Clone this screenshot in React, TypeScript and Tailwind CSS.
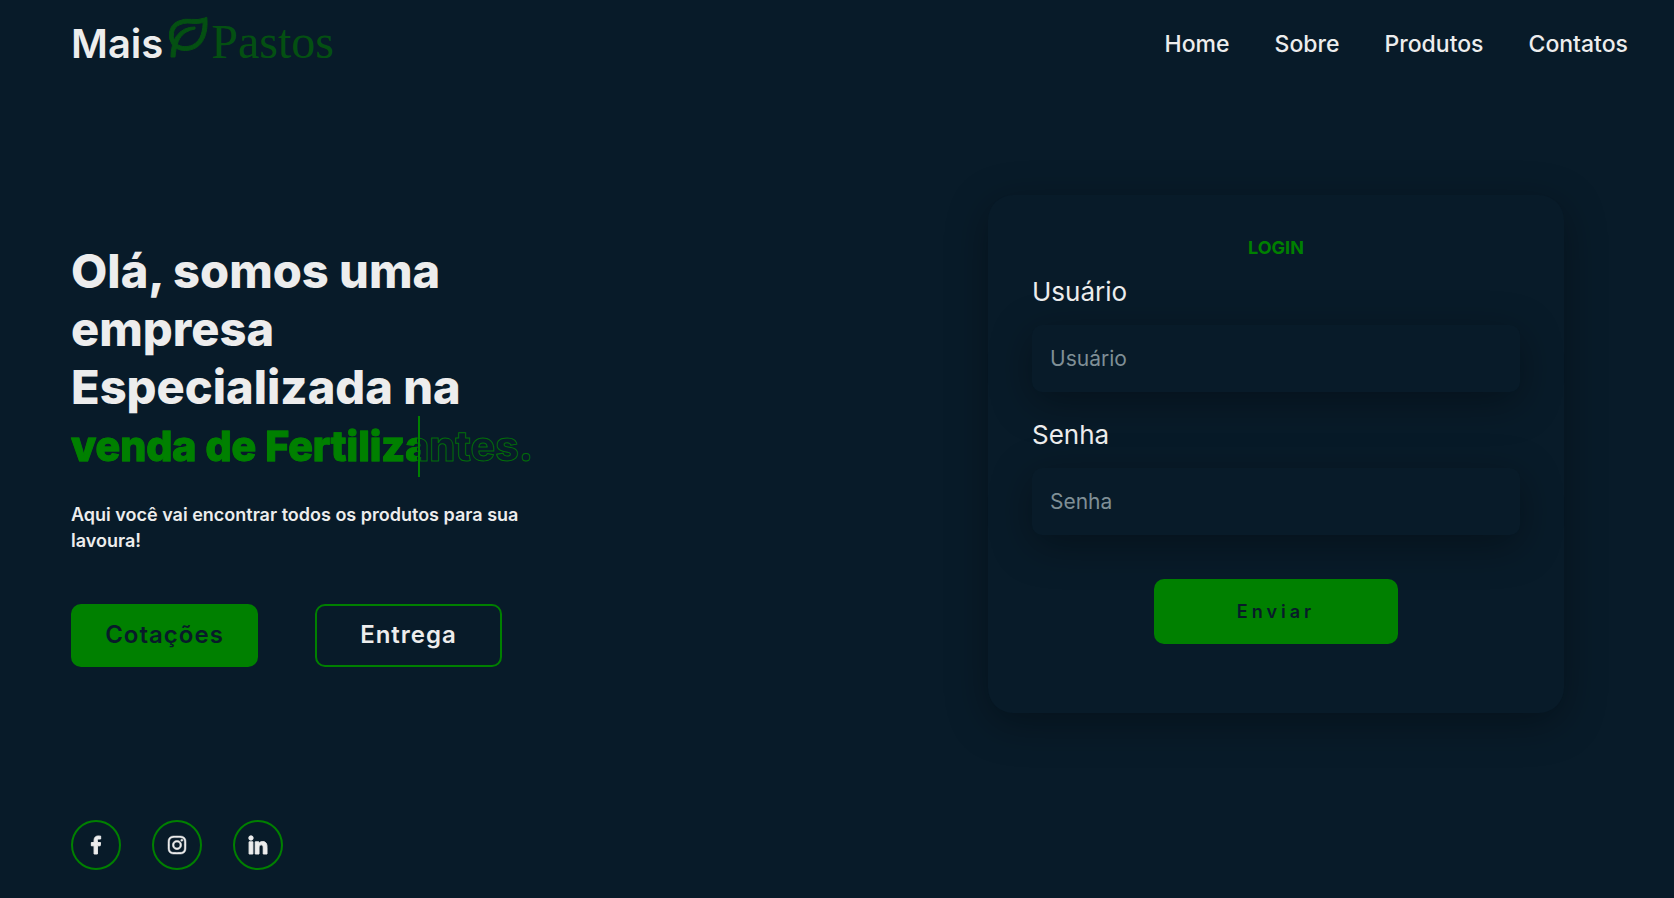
import React from "react";
import { BiLeaf, BiLogoFacebook, BiLogoInstagram, BiLogoLinkedin } from "react-icons/bi";

const links = ["Home", "Sobre", "Produtos", "Contatos"];

const socials = [
  { label: "Facebook", Icon: BiLogoFacebook, weight: "stroke-1" },
  { label: "Instagram", Icon: BiLogoInstagram, weight: "stroke-[0.5]" },
  { label: "LinkedIn", Icon: BiLogoLinkedin, weight: "stroke-1" },
];

function Header() {
  return (
    <header className="flex h-[88px] flex-wrap items-center justify-between pr-[46px] pl-[71px]">
      <a href="#home" className="flex items-center text-[40px] leading-none font-semibold">
        Mais
        <span className="flex items-center pb-1 font-['Liberation_Serif',serif] text-5xl leading-none font-normal text-[#045012]">
          <BiLeaf className="-mt-2.5 stroke-[#045012] stroke-[0.5]" aria-hidden="true" />
          Pastos
        </span>
      </a>
      <nav className="flex gap-[45px] text-[23px] font-medium">
        {links.map((link) => (
          <a key={link} href={`#${link.toLowerCase()}`}>
            {link}
          </a>
        ))}
      </nav>
    </header>
  );
}

function Hero() {
  return (
    <section className="w-[480px]">
      <h1 className="text-[47px] leading-[58px] font-extrabold">
        Olá, somos uma
        <br />
        empresa
        <br />
        Especializada na
      </h1>
      <h2 className="relative w-fit bg-linear-to-r from-[#008000] from-75% to-transparent to-75% bg-clip-text text-[41px] leading-[61px] font-extrabold whitespace-nowrap text-transparent [-webkit-text-stroke:1px_#008000d0]">
        venda de Fertilizantes.
        <span aria-hidden="true" className="absolute top-0 left-3/4 h-full w-0.5 bg-[#008000]" />
      </h2>
      <p className="mt-[25px] text-[18px] leading-[26px] font-semibold">
        Aqui você vai encontrar todos os produtos para sua lavoura!
      </p>
      <div className="mt-[50px] flex gap-[57px] text-2xl font-semibold tracking-[1px]">
        <button
          type="button"
          className="h-[63px] w-[187px] rounded-[10px] border-2 border-[#008000] bg-[#008000] text-[#081b29]"
        >
          Cotações
        </button>
        <button type="button" className="h-[63px] w-[187px] rounded-[10px] border-2 border-[#008000]">
          Entrega
        </button>
      </div>
    </section>
  );
}

function Field({ id, label, type }: { id: string; label: string; type: string }) {
  return (
    <div className="flex flex-col gap-[15px]">
      <label htmlFor={id} className="text-[26px] leading-9">
        {label}
      </label>
      <input
        id={id}
        type={type}
        placeholder={label}
        className="h-[67px] w-full rounded-[10px] bg-[#081b29] px-[18px] text-[21px] shadow-[0_10px_40px_#00000056] outline-none placeholder:text-[#7f8f96]"
      />
    </div>
  );
}

function Login() {
  return (
    <form className="flex w-[576px] flex-col items-center rounded-[25px] bg-[#081b29] px-11 pt-10 pb-[69px] shadow-[0_10px_40px_#00000056]">
      <h2 className="text-[18px] leading-[26px] font-bold text-[#008000]">LOGIN</h2>
      <div className="mt-[13px] flex w-full flex-col gap-[25px]">
        <Field id="usuario" label="Usuário" type="text" />
        <Field id="senha" label="Senha" type="password" />
      </div>
      <button
        type="button"
        className="mt-11 h-[65px] w-1/2 rounded-[10px] bg-[#008000] text-[18px] font-semibold tracking-[4px] text-[#081b29]"
      >
        Enviar
      </button>
    </form>
  );
}

export default function App() {
  return (
    <div className="flex min-h-screen flex-col bg-[#081b29] font-[Inter,sans-serif] text-[#ededed]">
      <Header />
      <main className="flex flex-1 flex-wrap items-center justify-between gap-8 pr-[110px] pl-[71px]">
        <Hero />
        <Login />
      </main>
      <footer className="flex gap-[31px] pb-7 pl-[71px]">
        {socials.map(({ label, Icon, weight }) => (
          <a
            key={label}
            href={`#${label.toLowerCase()}`}
            aria-label={label}
            className="flex size-[50px] items-center justify-center rounded-full border-2 border-[#008000] text-2xl"
          >
            <Icon className={`stroke-current ${weight}`} aria-hidden="true" />
          </a>
        ))}
      </footer>
    </div>
  );
}
